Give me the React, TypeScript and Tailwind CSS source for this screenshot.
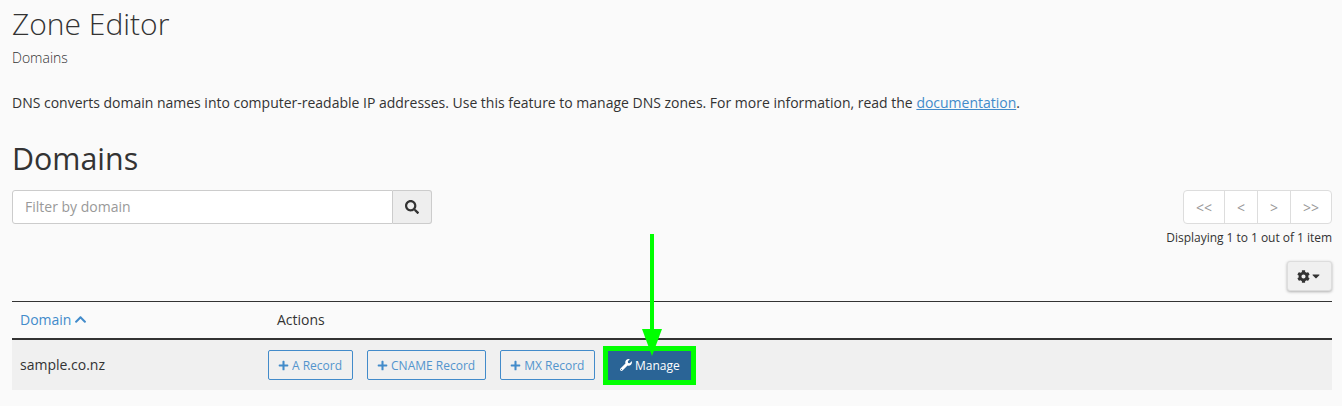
import React from "react";
import { FaSearch, FaCog, FaPlus, FaWrench, FaChevronUp, FaCaretDown } from "react-icons/fa";

const records = ["A Record", "CNAME Record", "MX Record"];
const pages = ["<<", "<", ">", ">>"];

function RecordButton({ label }: { label: string }) {
  return (
    <button
      type="button"
      className="h-[30px] flex items-center pl-[9px] pr-[10px] gap-[3px] rounded-[2px] border border-[#428bca] text-[12px] text-[#428bca]"
    >
      <FaPlus className="w-[11px] h-[11px]" />
      <span className="pt-[2px] opacity-90">{label}</span>
    </button>
  );
}

export default function App() {
  return (
    <div className="relative h-[406px] overflow-hidden bg-[#fafafa] pl-3 pr-[10px] text-[14px] text-[#333] font-['Open_Sans',sans-serif]">
      <h1 className="pt-[3px] text-[30px] leading-[41px] font-light">Zone Editor</h1>
      <p className="mt-[4px] text-[14px] leading-[20px] font-light">Domains</p>
      <p className="mt-[25px] leading-[20px] tracking-[-0.008px]">
        DNS converts domain names into computer-readable IP addresses. Use this feature to manage DNS zones. For more information, read the{" "}
        <a className="text-[#428bca] underline">documentation</a>.
      </p>
      <h2 className="mt-[25px] text-[30.4px] leading-[41px]">Domains</h2>

      <div className="mt-[11px] flex items-start justify-between">
        <div className="flex w-[420px] h-[34px]">
          <div className="flex-1 flex items-center px-3 pb-[2px] bg-white border border-[#ccc] rounded-l-[3px] text-[#999]">
            Filter by domain
          </div>
          <div className="w-[39px] flex items-center justify-center bg-[#eee] border border-l-0 border-[#ccc] rounded-r-[3px]">
            <FaSearch className="w-[14px] h-[14px]" />
          </div>
        </div>
        <div className="flex flex-col items-end">
          <div className="flex h-[34px] border border-[#ddd] rounded-[4px] bg-white text-[#999]">
            {pages.map((p, i) => (
              <div
                key={p}
                className={
                  "flex items-center justify-center " +
                  (i === 0 ? "w-[40px] " : i === 3 ? "w-[41px] " : "w-[33px] ") +
                  (i > 0 ? "border-l border-[#ddd]" : "")
                }
              >
                {p}
              </div>
            ))}
          </div>
          <div className="mt-[5px] text-[12px] leading-[17px] tracking-[-0.03px]">Displaying 1 to 1 out of 1 item</div>
          <button
            type="button"
            className="mt-[15px] w-[45px] h-[30px] flex items-center justify-center rounded-[3px] border border-[#ddd] bg-[#f0f0f0] shadow-[0_1px_3px_rgba(0,0,0,0.3)]"
          >
            <FaCog className="w-[13px] h-[13px]" />
            <FaCaretDown className="w-[12px] h-[12px]" />
          </button>
        </div>
      </div>

      <div className="mt-[10px] border-t border-[#333]">
        <div className="flex h-[38px] items-center border-b-2 border-[#333]">
          <div className="w-[256px] pl-2 pb-[2px] flex items-center gap-[3px] text-[#428bca]">
            Domain <FaChevronUp className="w-[13px] h-[13px]" />
          </div>
          <div className="pl-[9px] pb-[2px]">Actions</div>
        </div>
        <div className="flex h-[50px] items-center bg-[#f0f0f0]">
          <div className="w-[256px] pl-2 pb-[2px]">sample.co.nz</div>
          <div className="flex items-center gap-[14px]">
            {records.map((r) => (
              <RecordButton key={r} label={r} />
            ))}
            <button
              type="button"
              className="-ml-[6px] h-[39px] w-[93px] flex items-center justify-center gap-[3px] border-[5px] border-[#00ff00] bg-[#2a6496] text-[12px] text-white"
            >
              <FaWrench className="w-[12px] h-[12px]" />
              <span className="pt-[2px]">Manage</span>
            </button>
          </div>
        </div>
      </div>

      {/* annotation arrow over the table */}
      <svg className="absolute left-[640px] top-[232px]" width="24" height="126" viewBox="0 0 24 126">
        <rect x="10" y="2" width="4" height="100" fill="#00ff00" />
        <polygon points="2,97 22,97 12,124" fill="#00ff00" />
      </svg>
    </div>
  );
}
